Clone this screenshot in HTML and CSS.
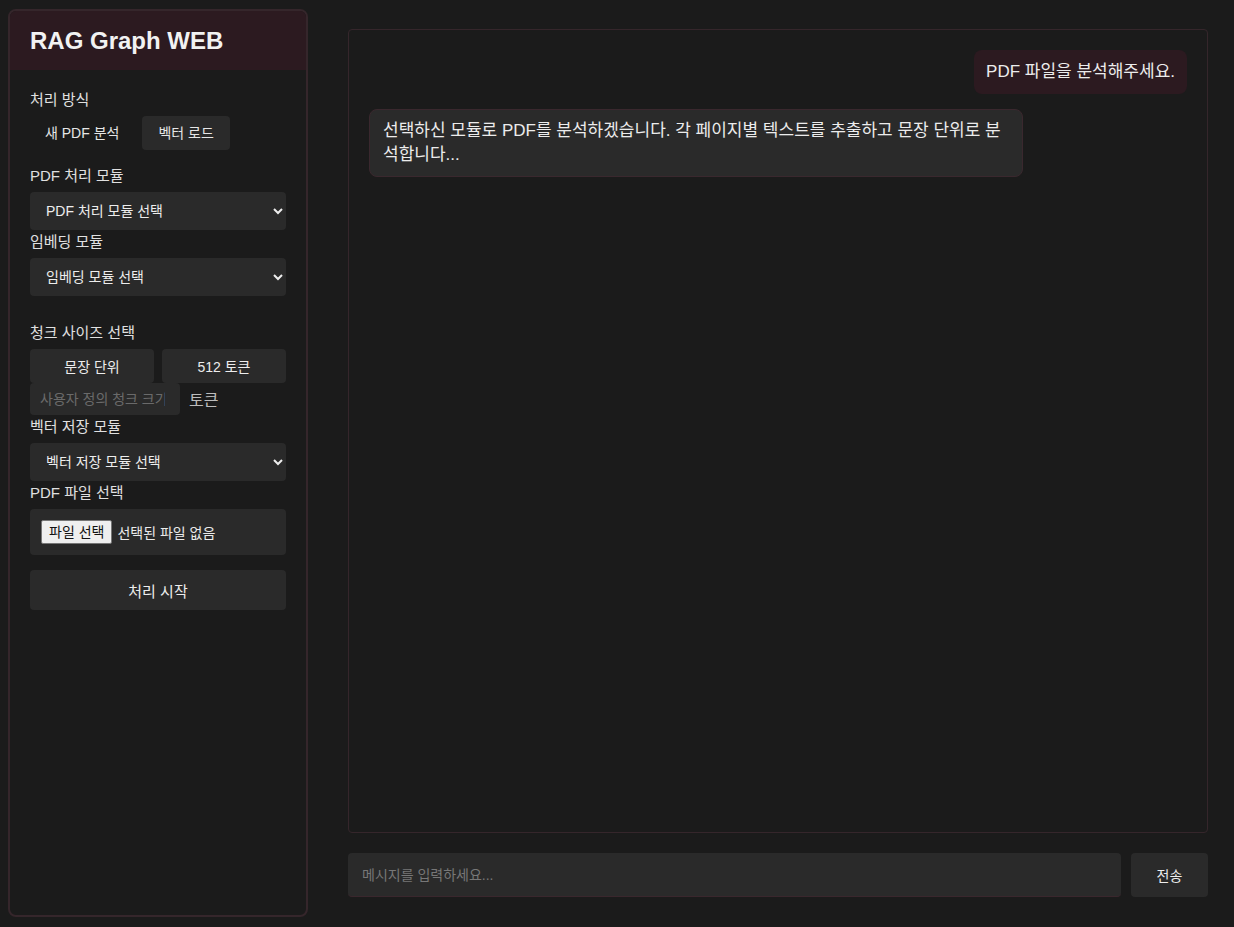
FILE: index.html
```html
<!DOCTYPE html>
<html lang="ko">
<head>
<meta charset="utf-8">
<title>RAG Graph WEB</title>
<link rel="stylesheet" href="styles.css">
</head>
<body>
<div class="app">
  <aside class="sidebar">
    <header class="sidebar-header">
      <h1 class="title">RAG Graph WEB</h1>
    </header>
    <div class="sidebar-body">
      <div class="label">처리 방식</div>
      <div class="tabs">
        <button class="tab active">새 PDF 분석</button>
        <button class="tab">벡터 로드</button>
      </div>

      <div class="label">PDF 처리 모듈</div>
      <select class="select">
        <option>PDF 처리 모듈 선택</option>
      </select>

      <div class="label">임베딩 모듈</div>
      <select class="select">
        <option>임베딩 모듈 선택</option>
      </select>

      <div class="label label-spaced">청크 사이즈 선택</div>
      <div class="chunk-buttons">
        <button class="chunk-btn">문장 단위</button>
        <button class="chunk-btn">512 토큰</button>
      </div>
      <div class="chunk-custom">
        <input class="chunk-input" type="text" placeholder="사용자 정의 청크 크기">
        <span class="chunk-unit">토큰</span>
      </div>

      <div class="label">벡터 저장 모듈</div>
      <select class="select">
        <option>벡터 저장 모듈 선택</option>
      </select>

      <div class="label">PDF 파일 선택</div>
      <div class="file-box">
        <label class="file-btn">파일 선택</label>
        <span class="file-name">선택된 파일 없음</span>
      </div>

      <button class="start-btn">처리 시작</button>
    </div>
  </aside>

  <main class="main">
    <section class="chat">
      <div class="msg msg-user">PDF 파일을 분석해주세요.</div>
      <div class="msg msg-bot">선택하신 모듈로 PDF를 분석하겠습니다. 각 페이지별 텍스트를 추출하고 문장 단위로 분석합니다...</div>
    </section>
    <div class="composer">
      <input class="composer-input" type="text" placeholder="메시지를 입력하세요...">
      <button class="send-btn">전송</button>
    </div>
  </main>
</div>
</body>
</html>
```

FILE: styles.css
```css
* { box-sizing: border-box; }

html, body {
  margin: 0;
  padding: 0;
  height: 100%;
  background: #1b1b1b;
  color: #e6e6e6;
  font-family: "Liberation Sans", "Noto Sans CJK KR", sans-serif;
}

.app {
  display: flex;
  height: 100vh;
  padding: 9px 10px 10px 8px;
}

.sidebar {
  width: 300px;
  flex: none;
  border: 2px solid #35262b;
  border-radius: 8px;
  overflow: hidden;
  display: flex;
  flex-direction: column;
}

.sidebar-header {
  background: #2c1a20;
  padding: 15px 20px;
}

.title {
  margin: 0;
  font-size: 24px;
  line-height: 29px;
  font-weight: bold;
  color: #f2f2f2;
}

.sidebar-body {
  padding: 21px 20px 20px 20px;
  display: flex;
  flex-direction: column;
}

.label {
  font-size: 15px;
  line-height: 17px;
  color: #e0e0e0;
  margin-bottom: 8px;
}

.label-spaced { margin-top: 25px; }

.tabs {
  display: flex;
  gap: 8px;
  margin-bottom: 17px;
}

.tab {
  font-family: inherit;
  font-size: 14px;
  line-height: 16px;
  color: #e6e6e6;
  background: transparent;
  border: none;
  border-radius: 4px;
  padding: 9px 15px;
  height: 34px;
}

.tab:not(.active) {
  background: #2a2a2a;
  padding: 9px 16px;
}

.select {
  font-family: inherit;
  font-size: 14px;
  color: #ededed;
  background: #2a2a2a;
  border: none;
  border-radius: 4px;
  height: 38px;
  padding: 0 12px;
  margin-bottom: 3px;
  width: 100%;
}

.chunk-buttons {
  display: flex;
  gap: 8px;
}

.chunk-btn {
  flex: 1;
  font-family: inherit;
  font-size: 14px;
  color: #ededed;
  background: #2a2a2a;
  border: none;
  border-radius: 4px;
  height: 34px;
}

.chunk-custom {
  display: flex;
  align-items: center;
  gap: 9px;
  margin-bottom: 3px;
}

.chunk-input {
  width: 150px;
  height: 32px;
  font-family: inherit;
  font-size: 14px;
  color: #e6e6e6;
  background: #2a2a2a;
  border: none;
  border-radius: 4px;
  padding: 0 15px 0 10px;
}

.chunk-input::placeholder { color: #6a6a6a; }

.chunk-unit {
  font-size: 16px;
  color: #bdbdbd;
}

.file-box {
  display: flex;
  align-items: center;
  gap: 5px;
  background: #2a2a2a;
  border-radius: 4px;
  height: 46px;
  padding: 0 11px;
  margin-bottom: 15px;
}

.file-btn {
  font-size: 14px;
  line-height: 22px;
  color: #111;
  background: #efefef;
  border: 1px solid #767676;
  border-radius: 2px;
  padding: 0 7px;
}

.file-name {
  font-size: 14px;
  color: #eaeaea;
}

.start-btn {
  font-family: inherit;
  font-size: 15px;
  color: #ededed;
  background: #2a2a2a;
  border: none;
  border-radius: 4px;
  height: 40px;
  width: 100%;
}

.main {
  flex: 1;
  display: flex;
  flex-direction: column;
  gap: 20px;
  padding: 20px 16px 20px 40px;
  min-width: 0;
}

.chat {
  flex: 1;
  border: 1px solid #35262b;
  border-radius: 4px;
  padding: 20px;
  display: flex;
  flex-direction: column;
  align-items: flex-start;
  gap: 15px;
}

.msg {
  max-width: 80%;
  font-size: 17px;
  line-height: 24px;
  border-radius: 8px;
  color: #ececec;
}

.msg-user {
  align-self: flex-end;
  background: #2c1a20;
  padding: 10px 12px;
}

.msg-bot {
  background: #2a2a2a;
  border: 1px solid #3a282e;
  padding: 9px 13px;
}

.composer {
  display: flex;
  gap: 10px;
  height: 44px;
}

.composer-input {
  flex: 1;
  font-family: inherit;
  font-size: 14px;
  color: #e6e6e6;
  background: #2a2a2a;
  border: none;
  border-bottom: 1px solid #3a272d;
  border-radius: 4px;
  padding: 0 14px;
}

.composer-input::placeholder { color: #777; }

.send-btn {
  width: 77px;
  font-family: inherit;
  font-size: 14px;
  color: #ededed;
  background: #2a2a2a;
  border: none;
  border-radius: 4px;
}
```
